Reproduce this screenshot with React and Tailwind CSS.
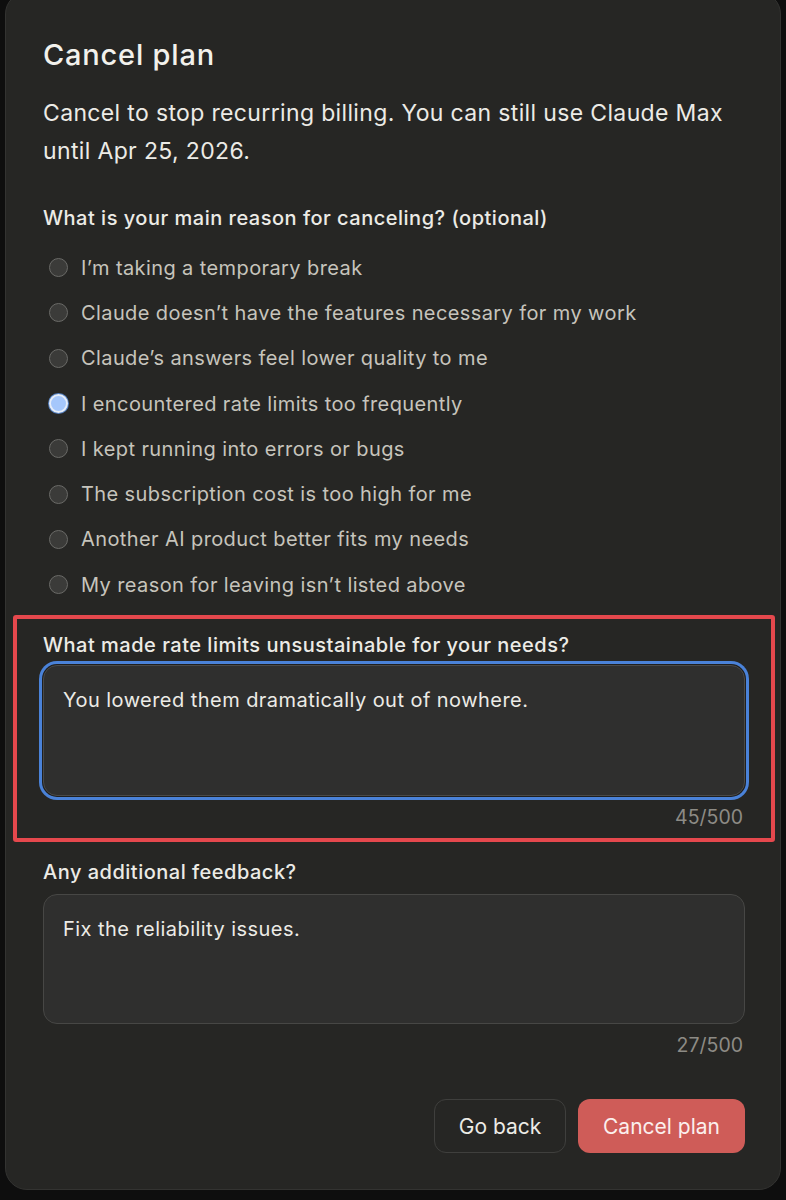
import React, { useState, useRef, useEffect } from 'react';

const reasons = [
  'I\u2019m taking a temporary break',
  'Claude doesn\u2019t have the features necessary for my work',
  'Claude\u2019s answers feel lower quality to me',
  'I encountered rate limits too frequently',
  'I kept running into errors or bugs',
  'The subscription cost is too high for me',
  'Another AI product better fits my needs',
  'My reason for leaving isn\u2019t listed above',
];

function Radio({ checked }) {
  if (checked) {
    return (
      <span className="w-[19px] h-[19px] rounded-full bg-[#a5c7fb] border-2 border-[#e6edf8] shadow-[0_0_0_1px_#5580c0] shrink-0" />
    );
  }
  return <span className="w-[19px] h-[19px] rounded-full bg-[#3b3b39] border border-[#6a6a67] shrink-0" />;
}

export default function App() {
  const [reason, setReason] = useState(3);
  const [detail, setDetail] = useState('You lowered them dramatically out of nowhere.');
  const [feedback, setFeedback] = useState('Fix the reliability issues.');
  const detailRef = useRef(null);

  useEffect(() => {
    const el = detailRef.current;
    if (el) {
      el.focus();
      el.setSelectionRange(el.value.length, el.value.length);
    }
  }, []);

  return (
    <div className="min-h-[1200px] bg-[#0e0e0e] pl-[5px] pr-[5px] font-['Inter','Noto_Sans',sans-serif] overflow-hidden">
      <div className="mt-[-8px] w-[776px] bg-[#262624] border border-[#333331] rounded-[22px] pl-[37px] pr-[35px] pt-[44px] pb-[36px]">
        <h2 className="text-[29px] leading-[36px] font-medium text-[#f2f1ec] tracking-[0.8px]">Cancel plan</h2>
        <p className="mt-[21px] text-[23px] leading-[38px] text-[#ecebe6] tracking-[0.35px]">
          Cancel to stop recurring billing. You can still use Claude Max until Apr 25, 2026.
        </p>

        <div className="mt-[34px] text-[20px] leading-[28px] font-medium text-[#ecebe6] tracking-[0.5px]">
          What is your main reason for canceling? (optional)
        </div>
        <div className="mt-[13px] flex flex-col">
          {reasons.map((r, i) => (
            <label
              key={r}
              onClick={() => setReason(i)}
              className="h-[45.3px] flex items-center gap-[13px] pl-[6px] cursor-pointer"
            >
              <Radio checked={reason === i} />
              <span className="text-[20px] text-[#c6c4bc] tracking-[0.4px]">{r}</span>
            </label>
          ))}
        </div>

        <div className="mt-[8px] -mx-[30px] border-[4px] border-[#e5484d] rounded-[3px] px-[26px] pt-[12px] pb-[9px]">
          <div className="text-[20px] leading-[28px] font-medium text-[#ecebe6] tracking-[0.5px]">
            What made rate limits unsustainable for your needs?
          </div>
          <div className="mt-[6px]">
            <textarea
              ref={detailRef}
              value={detail}
              onChange={(e) => setDetail(e.target.value)}
              className="block w-full h-[131px] resize-none rounded-[14px] bg-[#2f2f2e] border border-[#4a4a48] shadow-[0_0_0_1px_#1f1f1e,0_0_0_4px_#4a82d8] px-[19px] pt-[20px] pb-[19px] text-[20px] leading-[28px] text-[#ecebe6] tracking-[0.45px] caret-[#ecebe6] outline-none"
            />
          </div>
          <div className="mt-[9px] text-right text-[19.5px] leading-[24px] text-[#8d8b85] pr-[2px]">{detail.length}/500</div>
        </div>

        <div className="mt-[16px] text-[20px] leading-[28px] font-medium text-[#ecebe6] tracking-[0.5px]">Any additional feedback?</div>
        <textarea
          value={feedback}
          onChange={(e) => setFeedback(e.target.value)}
          className="mt-[8px] block w-full h-[130px] resize-none rounded-[14px] bg-[#2f2f2e] border border-[#474745] px-[19px] pt-[20px] pb-[18px] text-[20px] leading-[28px] text-[#ecebe6] tracking-[0.45px] outline-none"
        />
        <div className="mt-[9px] text-right text-[19.5px] leading-[24px] text-[#8d8b85] pr-[2px]">{feedback.length}/500</div>

        <div className="mt-[42px] flex justify-end gap-[12px]">
          <button className="w-[132px] h-[54px] rounded-[12px] border border-[#3f3f3d] text-[21px] text-[#ecebe6]">Go back</button>
          <button className="w-[167px] h-[54px] rounded-[12px] bg-[#cf5c58] text-[21px] text-[#fbefed]">Cancel plan</button>
        </div>
      </div>
    </div>
  );
}
